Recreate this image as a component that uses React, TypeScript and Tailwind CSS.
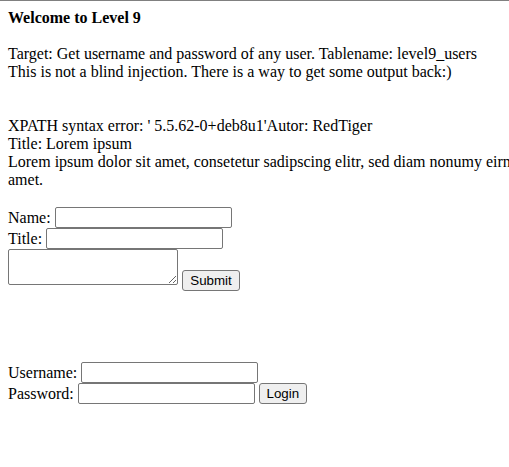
import React from "react";

const inputCls =
  "block h-[21px] w-[177px] border border-[#767676] rounded-[2px] bg-white px-[2px] py-[1px] text-[13.33px] [font-family:'Liberation_Sans',Arial,sans-serif] outline-none";
const btnCls =
  "block h-[21px] border border-[#767676] rounded-[3px] bg-[#efefef] text-center text-[13.33px] leading-[19px] text-black [font-family:'Liberation_Sans',Arial,sans-serif]";

export default function App() {
  return (
    <div className="w-[509px] h-[467px] overflow-hidden bg-white border-t border-[#808080] text-black text-[16px] leading-[18px] [font-family:'Liberation_Serif','Times_New_Roman',serif]">
      <div className="pt-[8px] pl-[8px]">
        <div className="h-[18px] font-bold">Welcome to Level 9</div>
        <div className="h-[18px]" />
        <div className="h-[18px] whitespace-nowrap">
          Target: Get username and password of any user. Tablename: level9_users
        </div>
        <div className="h-[18px] whitespace-nowrap">
          This is not a blind injection. There is a way to get some output back:)
        </div>
        <div className="h-[36px]" />
        <div className="h-[18px] whitespace-nowrap">
          XPATH syntax error: ' 5.5.62-0+deb8u1'Autor: RedTiger
        </div>
        <div className="h-[18px] whitespace-nowrap">Title: Lorem ipsum</div>
        <div className="h-[18px] whitespace-nowrap">
          Lorem ipsum dolor sit amet, consetetur sadipscing elitr, sed diam nonumy eirmod tempor
          invidunt ut labore et dolore magna aliquyam erat, sed diam voluptua. At vero eos et
          accusam et justo duo dolores et ea rebum. Stet clita kasd gubergren, no sea takimata
          sanctus est Lorem ipsum dolor sit
        </div>
        <div className="h-[18px]">amet.</div>
        <div className="h-[18px]" />
        <div className="flex items-center h-[21px]">
          <span className="whitespace-pre">Name: </span>
          <input type="text" className={inputCls} />
        </div>
        <div className="flex items-center h-[21px]">
          <span className="whitespace-pre">Title: </span>
          <input type="text" className={inputCls} />
        </div>
        <div className="flex items-start h-[42px]">
          <textarea className="block w-[170px] h-[36px] border border-[#767676] rounded-[2px] resize-y bg-white" />
          <button className={`${btnCls} w-[58px] ml-[4px] mt-[21px]`}>Submit</button>
        </div>
        <div className="h-[71px]" />
        <div className="flex items-center h-[21px]">
          <span className="whitespace-pre">Username: </span>
          <input type="text" className={inputCls} />
        </div>
        <div className="flex items-center h-[21px]">
          <span className="whitespace-pre">Password: </span>
          <input type="password" className={inputCls} />
          <button className={`${btnCls} w-[48px] ml-[4px]`}>Login</button>
        </div>
      </div>
    </div>
  );
}
